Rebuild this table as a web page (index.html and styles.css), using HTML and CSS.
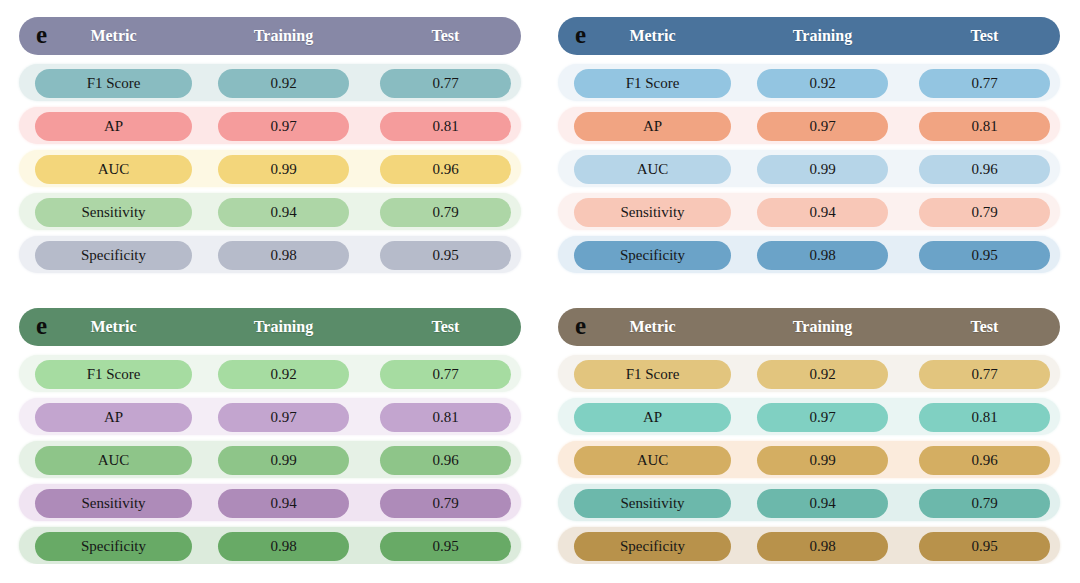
FILE: index.html
```html
<!DOCTYPE html>
<html lang="en">
<head>
<meta charset="utf-8">
<title>Metrics</title>
<link rel="stylesheet" href="styles.css">
</head>
<body>
<div class="page">
  <section class="panel p1">
    <div class="head grid"><div class="hc first"><span class="tag">e</span><span class="hl">Metric</span><span></span></div><div class="hc">Training</div><div class="hc end">Test</div></div>
    <div class="row grid r1"><div class="pill">F1 Score</div><div class="pill">0.92</div><div class="pill end">0.77</div></div>
    <div class="row grid r2"><div class="pill">AP</div><div class="pill">0.97</div><div class="pill end">0.81</div></div>
    <div class="row grid r3"><div class="pill">AUC</div><div class="pill">0.99</div><div class="pill end">0.96</div></div>
    <div class="row grid r4"><div class="pill">Sensitivity</div><div class="pill">0.94</div><div class="pill end">0.79</div></div>
    <div class="row grid r5"><div class="pill">Specificity</div><div class="pill">0.98</div><div class="pill end">0.95</div></div>
  </section>
  <section class="panel p2">
    <div class="head grid"><div class="hc first"><span class="tag">e</span><span class="hl">Metric</span><span></span></div><div class="hc">Training</div><div class="hc end">Test</div></div>
    <div class="row grid r1"><div class="pill">F1 Score</div><div class="pill">0.92</div><div class="pill end">0.77</div></div>
    <div class="row grid r2"><div class="pill">AP</div><div class="pill">0.97</div><div class="pill end">0.81</div></div>
    <div class="row grid r3"><div class="pill">AUC</div><div class="pill">0.99</div><div class="pill end">0.96</div></div>
    <div class="row grid r4"><div class="pill">Sensitivity</div><div class="pill">0.94</div><div class="pill end">0.79</div></div>
    <div class="row grid r5"><div class="pill">Specificity</div><div class="pill">0.98</div><div class="pill end">0.95</div></div>
  </section>
  <section class="panel p3">
    <div class="head grid"><div class="hc first"><span class="tag">e</span><span class="hl">Metric</span><span></span></div><div class="hc">Training</div><div class="hc end">Test</div></div>
    <div class="row grid r1"><div class="pill">F1 Score</div><div class="pill">0.92</div><div class="pill end">0.77</div></div>
    <div class="row grid r2"><div class="pill">AP</div><div class="pill">0.97</div><div class="pill end">0.81</div></div>
    <div class="row grid r3"><div class="pill">AUC</div><div class="pill">0.99</div><div class="pill end">0.96</div></div>
    <div class="row grid r4"><div class="pill">Sensitivity</div><div class="pill">0.94</div><div class="pill end">0.79</div></div>
    <div class="row grid r5"><div class="pill">Specificity</div><div class="pill">0.98</div><div class="pill end">0.95</div></div>
  </section>
  <section class="panel p4">
    <div class="head grid"><div class="hc first"><span class="tag">e</span><span class="hl">Metric</span><span></span></div><div class="hc">Training</div><div class="hc end">Test</div></div>
    <div class="row grid r1"><div class="pill">F1 Score</div><div class="pill">0.92</div><div class="pill end">0.77</div></div>
    <div class="row grid r2"><div class="pill">AP</div><div class="pill">0.97</div><div class="pill end">0.81</div></div>
    <div class="row grid r3"><div class="pill">AUC</div><div class="pill">0.99</div><div class="pill end">0.96</div></div>
    <div class="row grid r4"><div class="pill">Sensitivity</div><div class="pill">0.94</div><div class="pill end">0.79</div></div>
    <div class="row grid r5"><div class="pill">Specificity</div><div class="pill">0.98</div><div class="pill end">0.95</div></div>
  </section>
</div>
</body>
</html>
```
FILE: styles.css
```css
* { box-sizing: border-box; }
html, body { margin: 0; padding: 0; background: #ffffff; }
body { font-family: "Liberation Serif", "Times New Roman", serif; color: #161616; }

.page {
  display: grid;
  grid-template-columns: 502px 502px;
  column-gap: 37px;
  row-gap: 35px;
  padding: 17px 20px 0 19px;
}

.panel { display: flex; flex-direction: column; gap: 6px; }

.grid {
  display: grid;
  grid-template-columns: 157px 131px 136px;
  column-gap: 26px;
  padding: 0 10px 0 16px;
  align-items: center;
}

.head {
  height: 38px;
  border-radius: 19px;
  margin-bottom: 3px;
  background: var(--head);
  color: #ffffff;
  font-weight: bold;
  font-size: 16px;
  text-shadow: 0 1px 1px rgba(0, 0, 0, 0.18);
}
.hc { text-align: center; }
.hc.end, .pill.end { width: 131px; justify-self: end; }
.hc.first { display: grid; grid-template-columns: 24px 1fr 24px; align-items: center; }
.tag {
  color: #0d0d0d;
  font-size: 25px;
  font-weight: bold;
  text-shadow: none;
  text-align: left;
  padding-left: 1px;
  line-height: 1;
  margin-top: -3px;
}

.row {
  height: 37px;
  border-radius: 18.5px;
  background: var(--bg);
  box-shadow: 0 0 3px var(--bg);
  padding-top: 2px;
}
.pill {
  height: 29px;
  border-radius: 14.5px;
  background: var(--pill);
  display: flex;
  align-items: center;
  justify-content: center;
  font-size: 15px;
}

.p1 { --head: #8788a6; }
.p1 .r1 { --bg: #e5efef; --pill: #89bcc1; }
.p1 .r2 { --bg: #fde7e7; --pill: #f59c9c; }
.p1 .r3 { --bg: #fdf8e3; --pill: #f3d67b; }
.p1 .r4 { --bg: #eaf4e8; --pill: #add6a6; }
.p1 .r5 { --bg: #eceef3; --pill: #b6bbca; }

.p2 { --head: #4a739c; }
.p2 .r1 { --bg: #eef4f9; --pill: #93c5e1; }
.p2 .r2 { --bg: #fdeeed; --pill: #f1a482; }
.p2 .r3 { --bg: #f0f5f9; --pill: #b6d5e8; }
.p2 .r4 { --bg: #fcf1ef; --pill: #f8c7b7; }
.p2 .r5 { --bg: #e4eef6; --pill: #6ba3c8; }

.p3 { --head: #5a8c69; }
.p3 .r1 { --bg: #eef6ee; --pill: #a6dca1; }
.p3 .r2 { --bg: #f4edf6; --pill: #c3a5cf; }
.p3 .r3 { --bg: #e6f1e6; --pill: #8ec589; }
.p3 .r4 { --bg: #f0e4f2; --pill: #ae8bb9; }
.p3 .r5 { --bg: #dcebdc; --pill: #68aa66; }

.p4 { --head: #837563; }
.p4 .r1 { --bg: #f5f2ed; --pill: #e2c57e; }
.p4 .r2 { --bg: #e9f5f3; --pill: #80d0c2; }
.p4 .r3 { --bg: #fbebdc; --pill: #d4ae62; }
.p4 .r4 { --bg: #e1f0ee; --pill: #6cb8ab; }
.p4 .r5 { --bg: #eee5d9; --pill: #b8924b; }
```
